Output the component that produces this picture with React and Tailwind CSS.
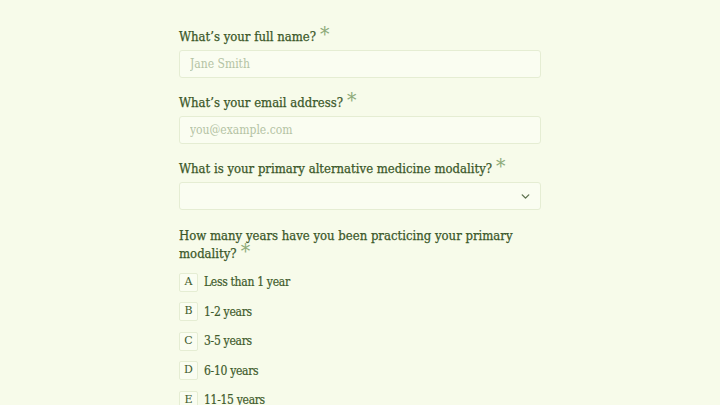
import React, { useState } from 'react';

const years = [
  { key: 'A', label: 'Less than 1 year' },
  { key: 'B', label: '1-2 years' },
  { key: 'C', label: '3-5 years' },
  { key: 'D', label: '6-10 years' },
  { key: 'E', label: '11-15 years' },
];

function Label({ children }) {
  return (
    <label className="block text-[13px] leading-[18px] text-[#3b5829] [font-stretch:condensed] [-webkit-text-stroke:0.25px_#3b5829]">
      {children}
      <span className="ml-[4px] inline-block text-[21px] leading-[10px] text-[#8fab7b] [-webkit-text-stroke:0px]">*</span>
    </label>
  );
}

export default function App() {
  const [picked, setPicked] = useState(null);

  return (
    <div className="min-h-[405px] bg-[#f7fbea] font-['DejaVu_Serif',serif]">
      <div className="mx-auto w-[362px] pt-[28px]">
        <div>
          <Label>What’s your full name?</Label>
          <input
            placeholder="Jane Smith"
            className="mt-[4px] h-[28px] w-full rounded-[3px] border border-[#e5edd3] bg-[#fafdf1] px-[10px] text-[12px] text-[#3f5b2c] placeholder:text-[#b4c3a4] outline-none [font-stretch:condensed]"
          />
        </div>

        <div className="mt-[16px]">
          <Label>What’s your email address?</Label>
          <input
            placeholder="you@example.com"
            className="mt-[4px] h-[28px] w-full rounded-[3px] border border-[#e5edd3] bg-[#fafdf1] px-[10px] text-[12px] text-[#3f5b2c] placeholder:text-[#b4c3a4] outline-none [font-stretch:condensed]"
          />
        </div>

        <div className="mt-[16px]">
          <Label>What is your primary alternative medicine modality?</Label>
          <div className="relative mt-[4px] h-[28px] w-full rounded-[3px] border border-[#e5edd3] bg-[#fafdf1]">
            <svg className="absolute right-[8px] top-[7px]" width="13" height="13" viewBox="0 0 24 24" fill="none" stroke="#5f7350" strokeWidth="2.6" strokeLinecap="round" strokeLinejoin="round">
              <path d="m6 9 6 6 6-6" />
            </svg>
          </div>
        </div>

        <div className="mt-[17px]">
          <Label>How many years have you been practicing your primary modality?</Label>
          <div className="mt-[9px] flex flex-col gap-[9.5px]">
            {years.map((y) => (
              <button key={y.key} onClick={() => setPicked(y.key)} className="flex h-[20px] items-center gap-[6px] text-left">
                <span className={`flex h-[19px] w-[19px] items-center justify-center rounded-[2px] border text-[11px] ${picked === y.key ? 'border-[#3f5b2c] bg-[#3f5b2c] text-white' : 'border-[#e5edd3] bg-[#fafdf1] text-[#3f5b2c]'}`}>
                  {y.key}
                </span>
                <span className="text-[12px] tracking-[-0.3px] text-[#3f5b2c] [font-stretch:condensed] [-webkit-text-stroke:0.2px_#3f5b2c]">{y.label}</span>
              </button>
            ))}
          </div>
        </div>
      </div>
    </div>
  );
}
